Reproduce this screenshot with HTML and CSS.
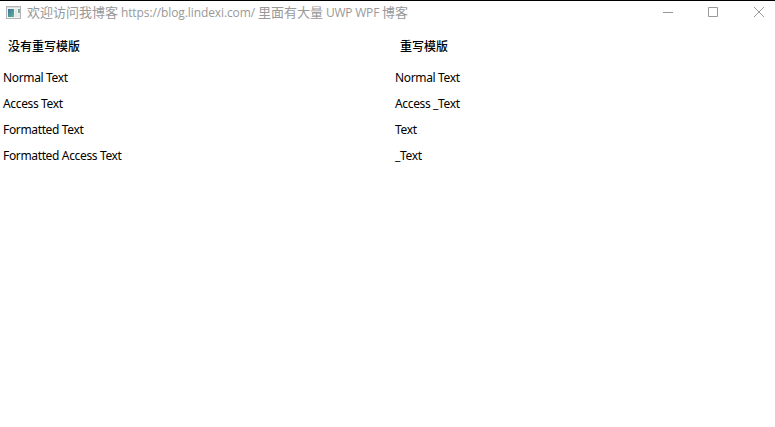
FILE: index.html
```html
<!DOCTYPE html>
<html lang="zh-CN">
<head>
<meta charset="utf-8">
<title>欢迎访问我博客</title>
<link rel="stylesheet" href="styles.css">
</head>
<body>
<div class="window">
  <header class="titlebar">
    <svg class="app-icon" width="16" height="14" viewBox="0 0 16 14">
      <defs>
        <linearGradient id="pane" x1="0" y1="0" x2="1" y2="1">
          <stop offset="0" stop-color="#3f6fa5"/>
          <stop offset="1" stop-color="#58b88c"/>
        </linearGradient>
      </defs>
      <rect x="0.5" y="0.5" width="14" height="12" fill="#f1f2f3" stroke="#b3b6b9"/>
      <rect x="1" y="1" width="13" height="1" fill="#dcdedf"/>
      <rect x="2" y="3" width="6" height="8" fill="url(#pane)"/>
      <rect x="9" y="3" width="2" height="8" fill="#e3e6e8"/>
      <rect x="12" y="3" width="2" height="4" fill="#79b09a"/>
      <rect x="12" y="8" width="2" height="3" fill="#e3e6e8"/>
    </svg>
    <h1 class="title">欢迎访问我博客 <span class="latin url">https://blog.lindexi.com/</span> 里面有大量 <span class="latin tech">UWP WPF</span> 博客</h1>
    <div class="controls">
      <svg width="45" height="23" viewBox="0 0 45 23"><path d="M18 11.5h10" stroke="#999" fill="none"/></svg>
      <svg width="45" height="23" viewBox="0 0 45 23"><path d="M18.5 6.5h9v9h-9z" stroke="#999" fill="none"/></svg>
      <svg width="45" height="23" viewBox="0 0 45 23"><path d="M19 6l10 10M29 6l-10 10" stroke="#999" fill="none"/></svg>
    </div>
  </header>
  <main class="columns">
    <section class="column">
      <h2 class="heading">没有重写模版</h2>
      <p class="label">Normal Text</p>
      <p class="label">Access Text</p>
      <p class="label">Formatted Text</p>
      <p class="label">Formatted Access Text</p>
    </section>
    <section class="column">
      <h2 class="heading">重写模版</h2>
      <p class="label">Normal Text</p>
      <p class="label">Access _Text</p>
      <p class="label">Text</p>
      <p class="label">_Text</p>
    </section>
  </main>
</div>
</body>
</html>
```
FILE: styles.css
```css
body {
  margin: 0;
  background: #fff;
  font-family: "Noto Sans", "Noto Sans CJK SC", sans-serif;
  color: #000;
}

.window {
  box-sizing: border-box;
  height: 427px;
  border-top: 1px solid #000;
  overflow: hidden;
}

.titlebar {
  display: flex;
  align-items: center;
  height: 23px;
  padding-left: 6px;
}

.app-icon {
  flex: none;
}

.title {
  flex: 1;
  margin: 0 0 0 5px;
  font-family: "Noto Sans CJK SC", sans-serif;
  font-size: 13px;
  font-weight: 400;
  line-height: 21px;
  padding-bottom: 2px;
  color: #999;
  white-space: nowrap;
}

.latin {
  font-family: "Open Sans", sans-serif;
  font-size: 12px;
}

.url {
  letter-spacing: -0.1px;
}

.tech {
  letter-spacing: -0.2px;
}

.controls {
  display: flex;
  margin-right: -5px;
}

.columns {
  display: grid;
  grid-template-columns: 392px 1fr;
}

.heading {
  margin: 0 0 6px;
  padding: 10px 8px 0;
  font-size: 12px;
  font-weight: 500;
  line-height: 25px;
}

.label {
  margin: 0;
  padding-left: 3px;
  font-size: 12px;
  line-height: 26px;
  letter-spacing: -0.35px;
}
```
